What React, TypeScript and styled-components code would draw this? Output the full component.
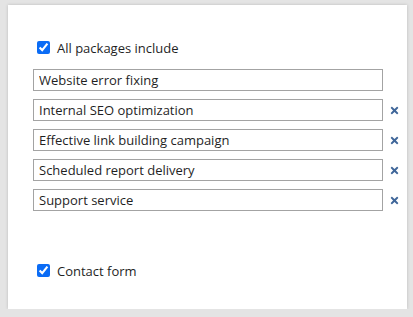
import React from 'react'
import styled, { createGlobalStyle } from 'styled-components'
import { FaTimes } from 'react-icons/fa'

const GlobalStyle = createGlobalStyle`
  html, body {
    margin: 0;
    padding: 0;
    background: #e4e4e4;
  }
  body {
    font-family: "Open Sans", "Noto Sans", "Liberation Sans", sans-serif;
  }
`

const Panel = styled.div`
  box-sizing: border-box;
  margin: 5px 6px 0 8px;
  width: 399px;
  height: 304px;
  background: #fff;
  box-shadow: 0 0 3px rgba(0, 0, 0, 0.18);
  padding: 33px 0 0 25px;
  display: flex;
  flex-direction: column;
`

const CheckRow = styled.label<{ $top?: number }>`
  display: flex;
  align-items: center;
  height: 19px;
  margin-top: ${(p) => p.$top ?? 0}px;
  font-size: 13px;
  color: #1f1f1f;

  input {
    width: 13px;
    height: 13px;
    margin: 3px 7px 3px 4px;
    accent-color: #0b6cf5;
  }
`

const List = styled.div`
  display: flex;
  flex-direction: column;
  gap: 8px;
  margin-top: 12px;
`

const Row = styled.div`
  display: flex;
  align-items: center;
  height: 22px;
`

const Field = styled.input`
  box-sizing: border-box;
  width: 350px;
  height: 22px;
  margin: 0;
  padding: 0 5px;
  border: 1px solid #a3a3a3;
  border-radius: 0;
  font-family: inherit;
  font-size: 13px;
  color: #1f1f1f;
  outline: none;
`

const Remove = styled.span`
  display: flex;
  align-items: center;
  margin-left: 6px;
  color: #3f6699;
  font-size: 11px;
`

const items = [
  'Website error fixing',
  'Internal SEO optimization',
  'Effective link building campaign',
  'Scheduled report delivery',
  'Support service',
]

export default function App() {
  return (
    <>
      <GlobalStyle />
      <Panel>
        <CheckRow>
          <input type="checkbox" defaultChecked />
          All packages include
        </CheckRow>
        <List>
          {items.map((item, i) => (
            <Row key={item}>
              <Field defaultValue={item} />
              {i > 0 && (
                <Remove>
                  <FaTimes />
                </Remove>
              )}
            </Row>
          ))}
        </List>
        <CheckRow $top={50}>
          <input type="checkbox" defaultChecked />
          Contact form
        </CheckRow>
      </Panel>
    </>
  )
}
